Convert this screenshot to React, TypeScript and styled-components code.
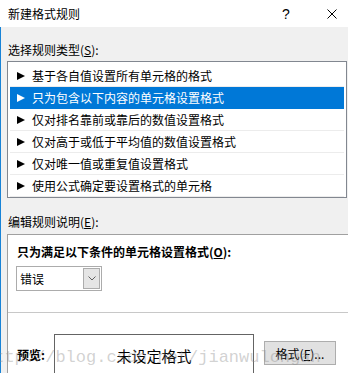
import React from "react";
import styled, { createGlobalStyle } from "styled-components";

const GlobalStyle = createGlobalStyle`
  html, body {
    margin: 0;
    padding: 0;
    background: #ffffff;
    overflow: hidden;
  }
  body {
    font-family: "Noto Sans CJK SC", "Noto Sans", sans-serif;
    font-size: 12px;
    color: #000;
  }
`;

const Window = styled.div`
  position: relative;
  width: 348px;
  height: 373px;
  display: flex;
  flex-direction: column;
  overflow: hidden;
`;

const TitleBar = styled.div`
  height: 27px;
  flex: none;
  display: flex;
  align-items: center;
  background: #ffffff;
  padding-left: 8px;
`;

const Title = styled.span`
  flex: 1;
  font-size: 12px;
  line-height: 16px;
`;

const HelpGlyph = styled.span`
  width: 14px;
  margin-right: 34px;
  font-family: "Liberation Sans", sans-serif;
  font-size: 14px;
  line-height: 16px;
  text-align: center;
`;

const CloseIcon = styled.svg`
  width: 10px;
  height: 10px;
  margin-right: 11px;
  display: block;
`;

const Body = styled.div`
  flex: 1;
  background: #f0f0f0;
  border-left: 1px solid #1883d7;
  padding-left: 6px;
  display: flex;
  flex-direction: column;
`;

const SectionLabel = styled.div<{ $top: number }>`
  margin-top: ${(p) => p.$top}px;
  padding-left: 1px;
  line-height: 16px;
`;

const ListBox = styled.div`
  margin-top: 3px;
  width: 340px;
  box-sizing: border-box;
  background: #ffffff;
  border: 1px solid #828790;
  padding: 3px 2px 0;
`;

const Row = styled.div<{ $selected?: boolean }>`
  height: 21px;
  display: flex;
  align-items: center;
  gap: 7px;
  padding-left: 7px;
  border-bottom: 1px solid ${(p) => (p.$selected ? "#0078d7" : "#ececec")};
  background: ${(p) => (p.$selected ? "#0078d7" : "transparent")};
  color: ${(p) => (p.$selected ? "#ffffff" : "#000000")};
  white-space: nowrap;
`;

const Arrow = styled.span<{ $selected?: boolean }>`
  width: 0;
  height: 0;
  border-top: 4.5px solid transparent;
  border-bottom: 4.5px solid transparent;
  border-left: 8px solid ${(p) => (p.$selected ? "#ffffff" : "#000000")};
`;

const Panel = styled.div`
  margin-top: 4px;
  flex: 1;
  width: 360px;
  background: #ffffff;
  border: 1px solid #a0a0a0;
  display: flex;
  flex-direction: column;
`;

const ConditionSection = styled.div`
  padding: 9px 0 0 9px;
  height: 68px;
`;

const BoldLabel = styled.div`
  font-weight: 700;
  line-height: 16px;
`;

const Select = styled.div`
  margin-top: 6px;
  margin-left: -1px;
  width: 86px;
  height: 25px;
  box-sizing: border-box;
  border: 1px solid #acacac;
  background: #ffffff;
  display: flex;
  align-items: center;
  justify-content: space-between;
  padding: 0 1px 0 3px;
`;

const SelectButton = styled.div`
  width: 17px;
  height: 21px;
  box-sizing: border-box;
  border: 1px solid #acacac;
  background: #e5e5e5;
  display: flex;
  align-items: center;
  justify-content: center;
`;

const Divider = styled.div`
  height: 1px;
  background: #c8c8c8;
`;

const PreviewRow = styled.div`
  margin-top: 21px;
  padding-left: 9px;
  display: flex;
  align-items: center;
`;

const PreviewLabel = styled.span`
  width: 37px;
  font-weight: 700;
  line-height: 16px;
`;

const PreviewBox = styled.div`
  width: 200px;
  height: 42px;
  box-sizing: border-box;
  border: 1px solid #646464;
  display: flex;
  align-items: center;
  justify-content: center;
  font-size: 15px;
`;

const FormatButton = styled.button`
  margin-left: 10px;
  margin-bottom: 4px;
  width: 72px;
  height: 24px;
  box-sizing: border-box;
  border: 1px solid #adadad;
  background: #e1e1e1;
  font-family: inherit;
  font-size: 12px;
  color: #000;
  padding: 0;
`;

const Watermark = styled.div`
  position: absolute;
  left: -16px;
  top: 349px;
  font-family: "Liberation Mono", monospace;
  font-size: 17px;
  line-height: 1;
  color: rgba(140, 140, 140, 0.4);
  white-space: nowrap;
  pointer-events: none;
`;

const items = [
  "基于各自值设置所有单元格的格式",
  "只为包含以下内容的单元格设置格式",
  "仅对排名靠前或靠后的数值设置格式",
  "仅对高于或低于平均值的数值设置格式",
  "仅对唯一值或重复值设置格式",
  "使用公式确定要设置格式的单元格",
];

export default function App() {
  return (
    <>
      <GlobalStyle />
      <Window>
        <TitleBar>
          <Title>新建格式规则</Title>
          <HelpGlyph>?</HelpGlyph>
          <CloseIcon viewBox="0 0 10 10">
            <path d="M0.5 0.5 L9.5 9.5 M9.5 0.5 L0.5 9.5" stroke="#000" strokeWidth="1" />
          </CloseIcon>
        </TitleBar>
        <Body>
          <SectionLabel $top={15}>
            选择规则类型(<u>S</u>):
          </SectionLabel>
          <ListBox>
            {items.map((text, i) => (
              <Row key={text} $selected={i === 1}>
                <Arrow $selected={i === 1} />
                {text}
              </Row>
            ))}
          </ListBox>
          <SectionLabel $top={16}>
            编辑规则说明(<u>E</u>):
          </SectionLabel>
          <Panel>
            <ConditionSection>
              <BoldLabel>
                只为满足以下条件的单元格设置格式(<u>O</u>):
              </BoldLabel>
              <Select>
                <span>错误</span>
                <SelectButton>
                  <svg width="8" height="5" viewBox="0 0 8 5">
                    <path d="M0.5 0.5 L4 4 L7.5 0.5" fill="none" stroke="#606060" strokeWidth="1" />
                  </svg>
                </SelectButton>
              </Select>
            </ConditionSection>
            <Divider />
            <PreviewRow>
              <PreviewLabel>预览:</PreviewLabel>
              <PreviewBox>未设定格式</PreviewBox>
              <FormatButton>
                格式(<u>F</u>)...
              </FormatButton>
            </PreviewRow>
          </Panel>
        </Body>
        <Watermark>http://blog.csdn.net/jianwulongan</Watermark>
      </Window>
    </>
  );
}
